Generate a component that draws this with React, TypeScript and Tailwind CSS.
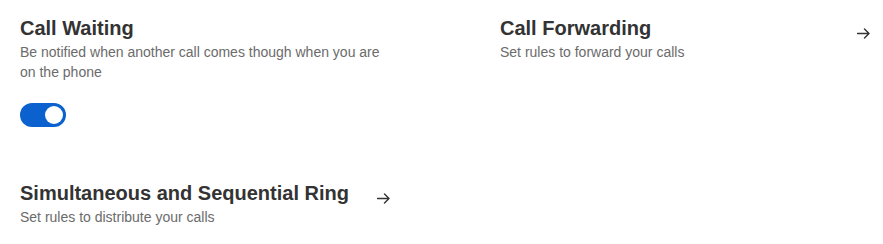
import React from "react";

function Arrow() {
  return (
    <svg width="13" height="11" viewBox="0 0 13 11" fill="none" className="shrink-0 mt-[14px]">
      <path d="M0.5 5.5H12M7.5 1L12 5.5L7.5 10" stroke="#333" strokeWidth="1.4" strokeLinecap="round" strokeLinejoin="round" />
    </svg>
  );
}

function Item({ title, desc, arrow, children }: { title: string; desc: string; arrow?: boolean; children?: React.ReactNode }) {
  return (
    <div className="flex justify-between items-start">
      <div className="flex flex-col">
        <div className="text-[20px] leading-7 font-bold text-[#333333]">{title}</div>
        <div className="text-[14px] leading-5 text-[#6b6b6b]">{desc}</div>
        {children}
      </div>
      {arrow && <Arrow />}
    </div>
  );
}

export default function App() {
  const [on, setOn] = React.useState(true);
  return (
    <div className="w-[883px] h-[244px] bg-white pl-5 pt-[14px]" style={{ fontFamily: '"Liberation Sans", Arial, sans-serif' }}>
      <div className="grid grid-cols-[370px_370px] gap-x-[110px] gap-y-[52px]">
        <Item title="Call Waiting" desc="Be notified when another call comes though when you are on the phone">
          <button
            onClick={() => setOn(!on)}
            className={`mt-[21px] w-[46px] h-[24px] rounded-full flex items-center px-[3px] ${on ? "bg-[#0b62cf] justify-end" : "bg-gray-300 justify-start"}`}
          >
            <span className="w-[18px] h-[18px] rounded-full bg-white" />
          </button>
        </Item>
        <Item title="Call Forwarding" desc="Set rules to forward your calls" arrow />
        <Item title="Simultaneous and Sequential Ring" desc="Set rules to distribute your calls" arrow />
      </div>
    </div>
  );
}
